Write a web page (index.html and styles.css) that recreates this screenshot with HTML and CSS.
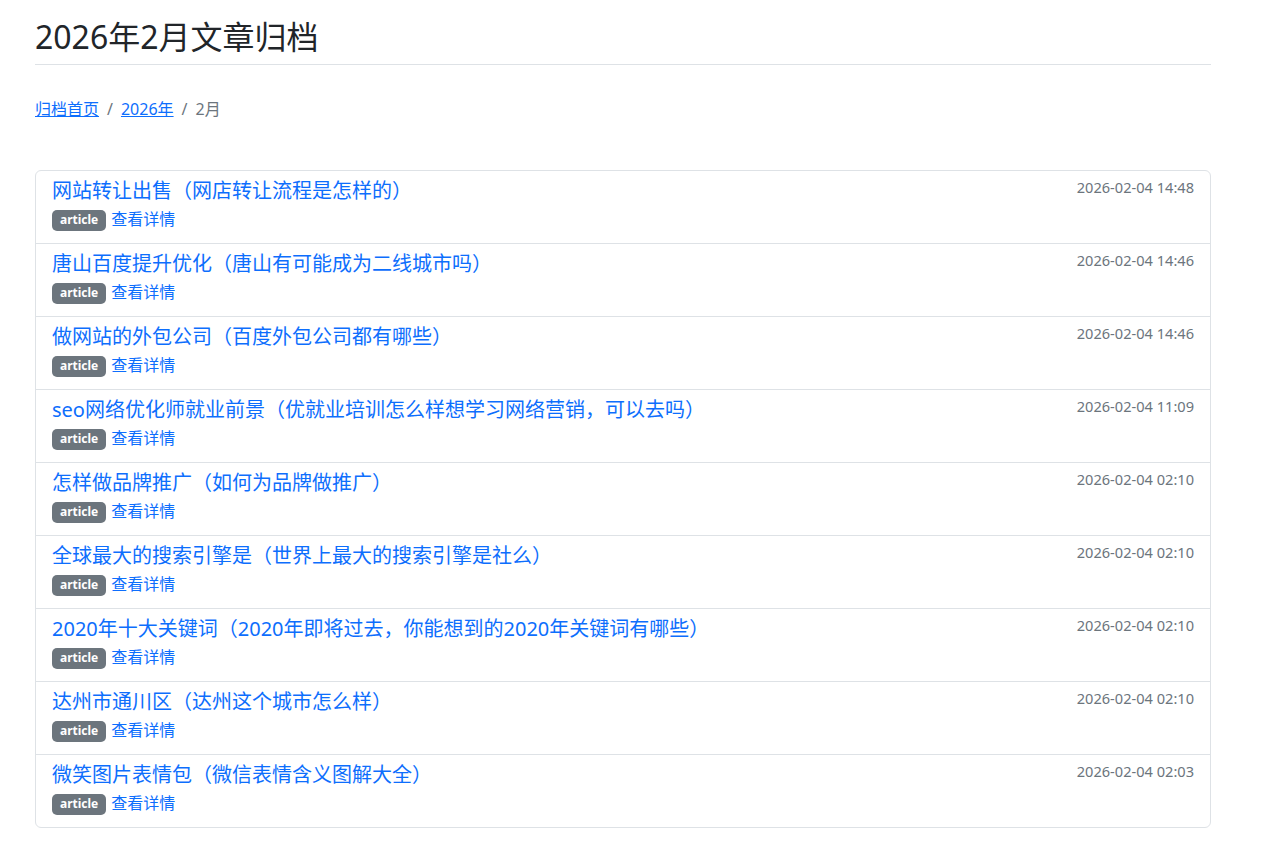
FILE: index.html
```html
<!DOCTYPE html>
<html lang="zh-CN">
<head>
<meta charset="utf-8">
<title>2026年2月文章归档</title>
<link rel="stylesheet" href="styles.css">
</head>
<body>
<div class="container">
  <h1 class="page-title">2026年2月文章归档</h1>
  <nav class="breadcrumb">
    <a href="#">归档首页</a>
    <span class="sep">/</span>
    <a href="#">2026年</a>
    <span class="sep">/</span>
    <span class="current">2月</span>
  </nav>
  <div class="list-group">
    <div class="item">
      <div class="item-head"><a class="item-title" href="#">网站转让出售（网店转让流程是怎样的）</a><small class="date">2026-02-04 14:48</small></div>
      <p class="item-meta"><span class="badge">article</span> <a class="more" href="#">查看详情</a></p>
    </div>
    <div class="item">
      <div class="item-head"><a class="item-title" href="#">唐山百度提升优化（唐山有可能成为二线城市吗）</a><small class="date">2026-02-04 14:46</small></div>
      <p class="item-meta"><span class="badge">article</span> <a class="more" href="#">查看详情</a></p>
    </div>
    <div class="item">
      <div class="item-head"><a class="item-title" href="#">做网站的外包公司（百度外包公司都有哪些）</a><small class="date">2026-02-04 14:46</small></div>
      <p class="item-meta"><span class="badge">article</span> <a class="more" href="#">查看详情</a></p>
    </div>
    <div class="item">
      <div class="item-head"><a class="item-title" href="#">seo网络优化师就业前景（优就业培训怎么样想学习网络营销，可以去吗）</a><small class="date">2026-02-04 11:09</small></div>
      <p class="item-meta"><span class="badge">article</span> <a class="more" href="#">查看详情</a></p>
    </div>
    <div class="item">
      <div class="item-head"><a class="item-title" href="#">怎样做品牌推广（如何为品牌做推广）</a><small class="date">2026-02-04 02:10</small></div>
      <p class="item-meta"><span class="badge">article</span> <a class="more" href="#">查看详情</a></p>
    </div>
    <div class="item">
      <div class="item-head"><a class="item-title" href="#">全球最大的搜索引擎是（世界上最大的搜索引擎是社么）</a><small class="date">2026-02-04 02:10</small></div>
      <p class="item-meta"><span class="badge">article</span> <a class="more" href="#">查看详情</a></p>
    </div>
    <div class="item">
      <div class="item-head"><a class="item-title" href="#">2020年十大关键词（2020年即将过去，你能想到的2020年关键词有哪些）</a><small class="date">2026-02-04 02:10</small></div>
      <p class="item-meta"><span class="badge">article</span> <a class="more" href="#">查看详情</a></p>
    </div>
    <div class="item">
      <div class="item-head"><a class="item-title" href="#">达州市通川区（达州这个城市怎么样）</a><small class="date">2026-02-04 02:10</small></div>
      <p class="item-meta"><span class="badge">article</span> <a class="more" href="#">查看详情</a></p>
    </div>
    <div class="item">
      <div class="item-head"><a class="item-title" href="#">微笑图片表情包（微信表情含义图解大全）</a><small class="date">2026-02-04 02:03</small></div>
      <p class="item-meta"><span class="badge">article</span> <a class="more" href="#">查看详情</a></p>
    </div>
  </div>
</div>
</body>
</html>
```

FILE: styles.css
```css
html, body {
  margin: 0;
  padding: 0;
  background: #fff;
}
body {
  font-family: "Noto Sans", "Noto Sans CJK SC", sans-serif;
  font-size: 16px;
  line-height: 1.5;
  color: #212529;
}
.container {
  width: 1176px;
  padding: 18px 0 40px 35px;
}
.page-title {
  margin: 0;
  font-size: 32px;
  font-weight: 400;
  line-height: 38px;
  padding-bottom: 8px;
  border-bottom: 1px solid #dee2e6;
  color: #212529;
}
.breadcrumb {
  display: flex;
  align-items: center;
  margin-top: 32px;
  line-height: 24px;
  font-size: 16px;
}
.breadcrumb a {
  color: #0d6efd;
  text-decoration: underline;
}
.breadcrumb .sep {
  color: #6c757d;
  padding: 0 8px;
}
.breadcrumb .current {
  color: #6c757d;
}
.list-group {
  margin-top: 49px;
  border: 1px solid #dee2e6;
  border-radius: 6px;
}
.item {
  padding: 8px 16px;
  border-top: 1px solid #dee2e6;
}
.item:first-child {
  border-top: 0;
}
.item-head {
  display: flex;
  justify-content: space-between;
  align-items: flex-start;
  margin-bottom: 4px;
}
.item-title {
  font-size: 20px;
  line-height: 24px;
  color: #0d6efd;
  text-decoration: none;
}
.date {
  font-size: 14.6px;
  line-height: 17px;
  color: #6c757d;
}
.item-meta {
  margin: 0 0 4px;
  line-height: 24px;
  display: flex;
  align-items: center;
  gap: 5px;
}
.badge {
  display: inline-block;
  background: #6c757d;
  color: #fff;
  font-size: 12px;
  font-weight: 700;
  line-height: 1;
  padding: 4px 8px 5px;
  border-radius: 5px;
  margin-top: 2px;
}
.item-meta .more {
  color: #0d6efd;
  text-decoration: none;
  font-size: 16px;
}
```
